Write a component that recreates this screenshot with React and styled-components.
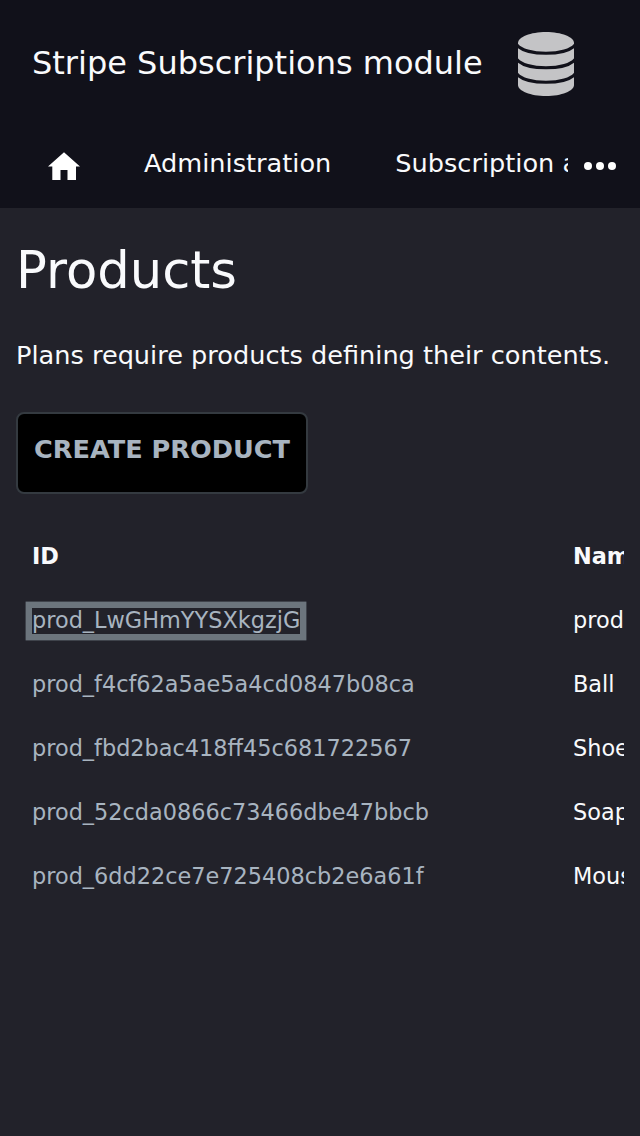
import React from 'react';
import styled, { createGlobalStyle } from 'styled-components';

const Global = createGlobalStyle`
  * { box-sizing: border-box; }
  body { margin: 0; background: #22222a; color: #f9fafc; font-family: "DejaVu Sans", sans-serif; overflow: hidden; }
`;
const Page = styled.div`height: 1136px; display: flex; flex-direction: column; background: #22222a;`;
const Header = styled.header`height: 208px; background: #11111a; flex: none;`;
const Brand = styled.div`
  height: 128px; padding: 0 66px 0 32px; display: flex; align-items: center; justify-content: space-between;
  font-size: 32px; line-height: 48px; white-space: nowrap;
`;
const BrandName = styled.span`padding-bottom: 2px;`;
const Nav = styled.nav`height: 80px; padding-bottom: 4px; display: flex; align-items: center;`;
const Links = styled.div`
  width: 568px; height: 76px; padding-left: 48px; overflow: hidden; display: flex; align-items: center;
  gap: 64px; white-space: nowrap; font-size: 25.6px; line-height: 38px;
`;
const NavLink = styled.span`padding-bottom: 6px;`;
const More = styled.svg`margin-left: 16px;`;
const Home = styled.svg`flex: none;`;
const Main = styled.main`padding: 24px 16px 0;`;
const Title = styled.h1`margin: 0; font-size: 51.2px; font-weight: 400; line-height: 76px;`;
const Lead = styled.p`margin: 28px 0 0; font-size: 25.6px; line-height: 38px; white-space: nowrap;`;
const Button = styled.button`
  display: block; margin-top: 38px; width: 292px; height: 82px; padding: 0 0 8px; background: #000;
  border: 2px solid #343a40; border-radius: 8px; color: #a8b4c0; font: bold 25.6px "DejaVu Sans", sans-serif; white-space: nowrap;
`;
const Table = styled.div`margin-top: 30px; overflow: hidden; font-size: 22.4px;`;
const Row = styled.div`
  height: 64px; display: grid; grid-template-columns: 541px 200px; align-items: center; padding-left: 16px;
  font-weight: ${p => (p.$head ? 700 : 400)};
`;
const ProductLink = styled.a`
  color: #a8b4c0; justify-self: start; line-height: 24px; margin-top: 2px; padding-bottom: 2px;
  box-shadow: ${p => (p.$focused ? '0 0 0 6.4px #6c757d' : 'none')};
`;

const products = [
  ['prod_LwGHmYYSXkgzjG', 'product'],
  ['prod_f4cf62a5ae5a4cd0847b08ca', 'Ball'],
  ['prod_fbd2bac418ff45c681722567', 'Shoes'],
  ['prod_52cda0866c73466dbe47bbcb', 'Soap'],
  ['prod_6dd22ce7e725408cb2e6a61f', 'Mouse'],
];

export default function App() {
  return (
    <Page>
      <Global />
      <Header>
        <Brand>
          <BrandName>Stripe Subscriptions module</BrandName>
          <svg width="56" height="64" viewBox="0 0 56 64">
            <path fill="#c4c4c6" d="M0 11C0 5 12.500 0 28 0s28 5 28 11v42c0 6-12.500 11-28 11S0 59 0 53z" />
            <g fill="none" stroke="#11111a" strokeWidth="3">
              <path d="M-1 13c4 5 15 8.300 29 8.300S53 18 57 13" />
              <path d="M-1 27.500c4 5 15 8.300 29 8.300s25-3.300 29-8.300" />
              <path d="M-1 42c4 5 15 8.300 29 8.300S53 47 57 42" />
            </g>
          </svg>
        </Brand>
        <Nav>
          <Links>
            <Home width="32" height="28" viewBox="0 0 32 28" fill="#fff"><path d="M16 .2 0 14.500h4.300V28h8.200V18h7v10H28V14.500h4z" /></Home>
            <NavLink>Administration</NavLink>
            <NavLink>Subscription administration</NavLink>
          </Links>
          <More width="32" height="8" viewBox="0 0 32 8" fill="#fff"><circle cx="4" cy="4" r="4" /><circle cx="16" cy="4" r="4" /><circle cx="28" cy="4" r="4" /></More>
        </Nav>
      </Header>
      <Main>
        <Title>Products</Title>
        <Lead>Plans require products defining their contents.</Lead>
        <Button>CREATE PRODUCT</Button>
        <Table>
          <Row $head><span>ID</span><span>Name</span></Row>
          {products.map(([id, name], i) => (
            <Row key={id}><ProductLink $focused={i === 0}>{id}</ProductLink><span>{name}</span></Row>
          ))}
        </Table>
      </Main>
    </Page>
  );
}
